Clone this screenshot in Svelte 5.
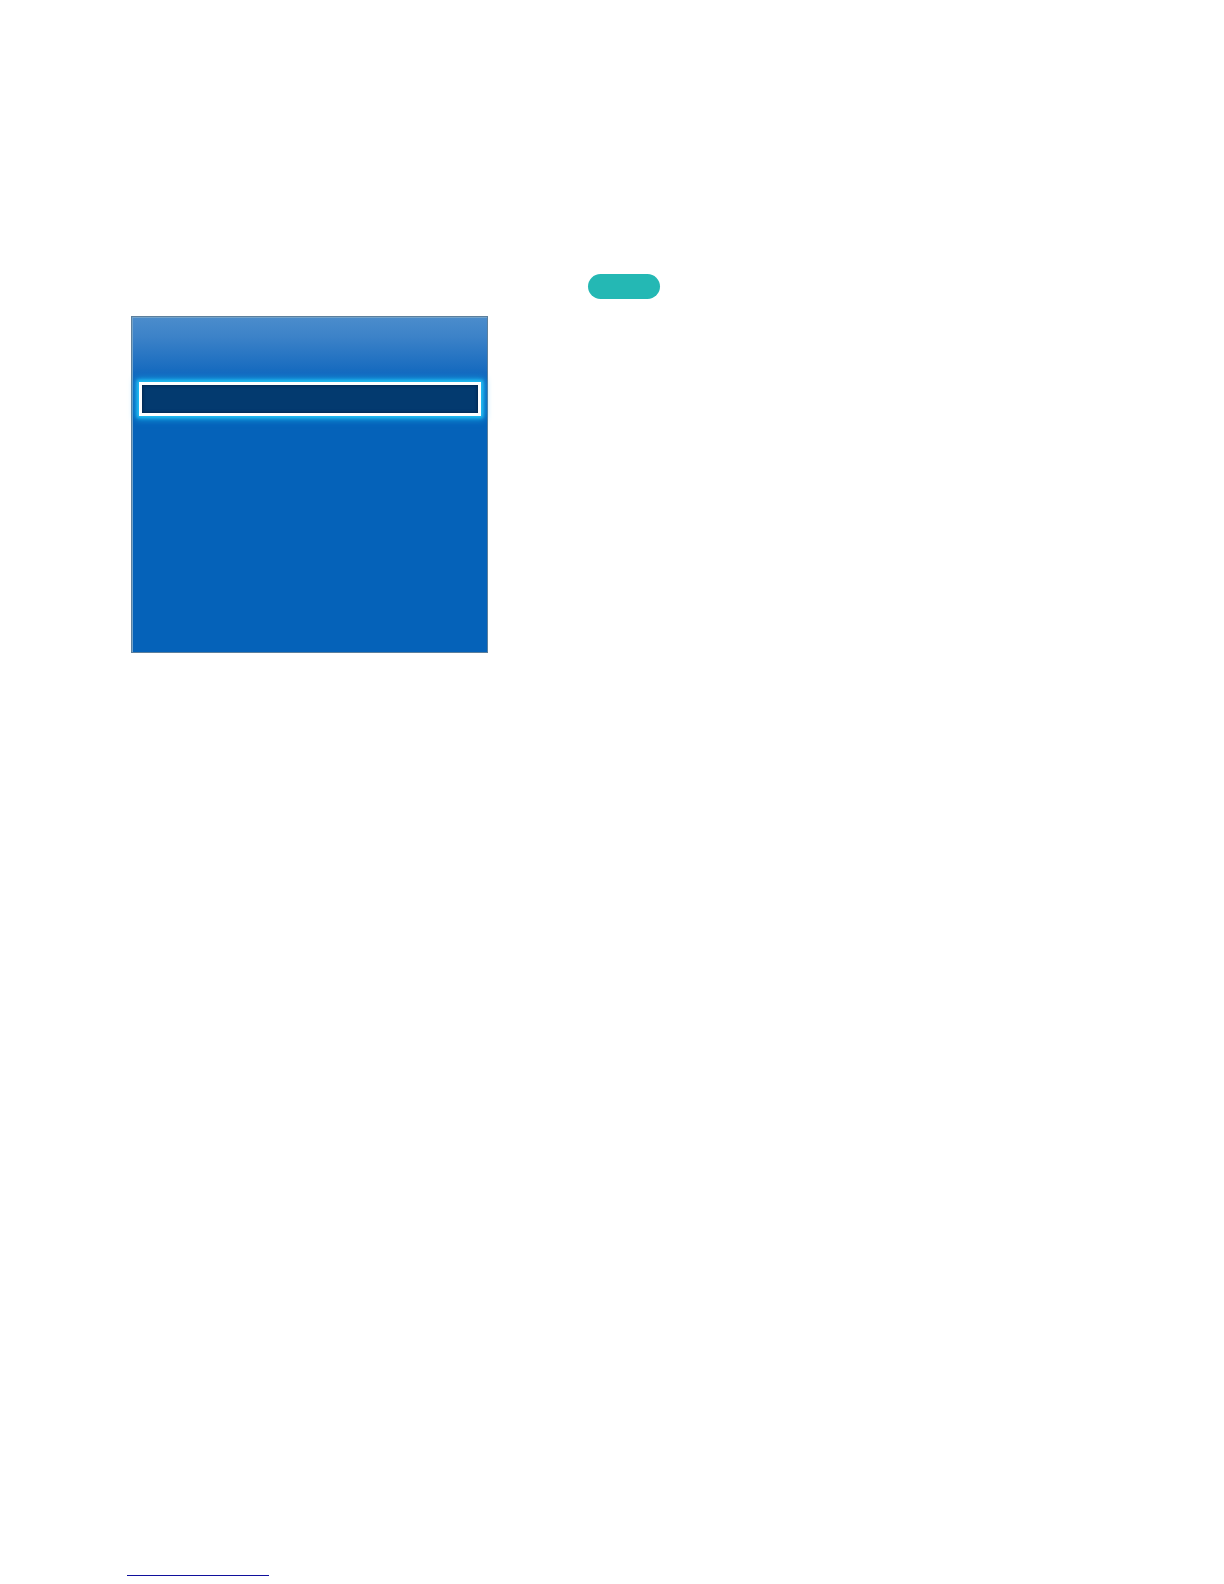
<script>
	let items = [{ id: 'first', selected: true }];
</script>

<main class="page">
	<div class="tag-row">
		<span class="tag"></span>
	</div>

	<section class="menu">
		<div class="menu-header"></div>
		{#each items as item (item.id)}
			<div class="menu-item" class:selected={item.selected}></div>
		{/each}
	</section>

	<footer>
		<div class="rule"></div>
	</footer>
</main>

<style>
	:global(body) {
		margin: 0;
		background: #fff;
	}

	.page {
		display: flex;
		flex-direction: column;
		box-sizing: border-box;
		min-height: 100vh;
		padding: 274px 127px 8px;
		font-family: "Liberation Sans", Arial, sans-serif;
	}

	.tag-row {
		display: flex;
		padding-left: 461px;
		margin-bottom: 17px;
	}

	.tag {
		width: 72px;
		height: 25px;
		border-radius: 13px;
		background: #24b8b4;
	}

	.menu {
		box-sizing: border-box;
		width: 357px;
		max-width: 100%;
		min-height: 337px;
		margin-left: 4px;
		padding: 0 6px 0 7px;
		border: 1px solid #5c7f9c;
		background: linear-gradient(#4b8ccc 0, #3c82c8 20px, #1268be 58px, #0562b9 100px);
		box-shadow: inset 1px 1px #72a3cb;
	}

	.menu-header {
		height: 65px;
	}

	.menu-item {
		box-sizing: border-box;
		height: 34px;
	}

	.selected {
		border: 3px solid #fff;
		background: #033a6f;
		box-shadow: 0 0 3px 2px #22bdf2, 0 0 7px 3px #16a5e6, inset 0 0 3px 1px #03284f;
	}

	footer {
		margin-top: auto;
	}

	.rule {
		width: 142px;
		height: 1px;
		background: #10109c;
	}
</style>
